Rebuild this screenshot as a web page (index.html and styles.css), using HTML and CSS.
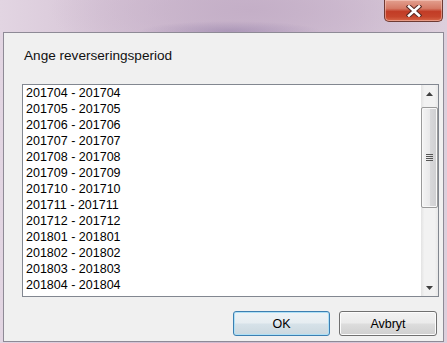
FILE: index.html
```html
<!DOCTYPE html>
<html>
<head>
<meta charset="utf-8">
<link rel="stylesheet" href="styles.css">
</head>
<body>
<div class="window">
  <div class="titlebar">
    <div class="close">
      <svg width="16" height="12" viewBox="0 0 16 12">
        <path d="M3 1.5 L13 10.5 M13 1.5 L3 10.5" stroke="#5a2a24" stroke-width="4.6" stroke-linecap="square" fill="none"/>
        <path d="M3 1.5 L13 10.5 M13 1.5 L3 10.5" stroke="#ffffff" stroke-width="2.6" stroke-linecap="square" fill="none"/>
      </svg>
    </div>
  </div>
  <div class="client">
    <div class="label">Ange reverseringsperiod</div>
    <div class="listbox">
      <div class="items">
        <div class="item">201704 - 201704</div>
        <div class="item">201705 - 201705</div>
        <div class="item">201706 - 201706</div>
        <div class="item">201707 - 201707</div>
        <div class="item">201708 - 201708</div>
        <div class="item">201709 - 201709</div>
        <div class="item">201710 - 201710</div>
        <div class="item">201711 - 201711</div>
        <div class="item">201712 - 201712</div>
        <div class="item">201801 - 201801</div>
        <div class="item">201802 - 201802</div>
        <div class="item">201803 - 201803</div>
        <div class="item">201804 - 201804</div>
        <div class="item">201805 - 201805</div>
      </div>
      <div class="scrollbar">
        <div class="arrow">
          <svg width="7" height="4" viewBox="0 0 7 4"><path d="M0 4 L3.5 0 L7 4 Z" fill="#404040"/></svg>
        </div>
        <div class="thumb">
          <div class="grip"><span></span><span></span><span></span><span></span></div>
        </div>
        <div class="track"></div>
        <div class="arrow">
          <svg width="7" height="4" viewBox="0 0 7 4"><path d="M0 0 L7 0 L3.5 4 Z" fill="#404040"/></svg>
        </div>
      </div>
    </div>
    <div class="buttons">
      <div class="btn ok">OK</div>
      <div class="btn cancel">Avbryt</div>
    </div>
  </div>
</div>
</body>
</html>
```

FILE: styles.css
```css
html, body {
  margin: 0;
  padding: 0;
}
body {
  width: 447px;
  height: 343px;
  overflow: hidden;
  font-family: "Liberation Sans", Arial, sans-serif;
}
.window {
  width: 447px;
  height: 343px;
  background:
    radial-gradient(ellipse 90px 10px at 230px 31px, rgba(150,130,170,0.55), rgba(150,130,170,0) 100%),
    radial-gradient(ellipse 200px 60px at 250px 10px, #c4afc7 0%, rgba(196,175,199,0) 100%),
    linear-gradient(90deg, #e2d5e2 0%, #d6c4d6 25%, #cdb9cf 50%, #d3c2d5 75%, #ddcfdc 100%);
  display: flex;
  flex-direction: column;
}
.titlebar {
  height: 32px;
  display: flex;
  justify-content: flex-end;
  align-items: flex-start;
  padding-right: 4px;
}
.close {
  width: 57px;
  height: 21px;
  border: 1px solid #6e3a33;
  border-top: none;
  border-radius: 0 0 5px 5px;
  background: linear-gradient(180deg, #e3a08f 0%, #d57a66 40%, #c23c26 55%, #c6452c 80%, #d9684a 100%);
  box-shadow: inset 0 0 0 1px rgba(255,220,210,0.45);
  display: flex;
  align-items: center;
  justify-content: center;
}
.close svg {
  margin-top: 1px;
}
.client {
  width: 441px;
  height: 310px;
  margin-left: 3px;
  box-sizing: border-box;
  border: 1px solid #8e8a96;
  background: #f0f0f0;
  display: flex;
  flex-direction: column;
}
.label {
  margin: 15px 0 0 20px;
  font-size: 13.6px;
  line-height: 16px;
  height: 16px;
  color: #111;
}
.listbox {
  margin: 20px 0 0 18px;
  width: 417px;
  height: 213px;
  box-sizing: border-box;
  border: 1px solid #828790;
  background: #fff;
  display: flex;
}
.items {
  flex: 1;
  overflow: hidden;
  padding-left: 3px;
}
.item {
  font-size: 12.5px;
  line-height: 16px;
  height: 16px;
  color: #000;
  white-space: nowrap;
}
.scrollbar {
  width: 17px;
  background: linear-gradient(90deg, #e3e3e3 0%, #f2f2f2 20%, #f2f2f2 80%, #e8e8e8 100%);
  display: flex;
  flex-direction: column;
}
.arrow {
  height: 17px;
  display: flex;
  align-items: center;
  justify-content: center;
}
.thumb {
  margin: 5px 0 0 0;
  height: 101px;
  box-sizing: border-box;
  border: 1px solid #9a9a9a;
  border-radius: 2px;
  background: linear-gradient(90deg, #f4f4f4 0%, #e9e9ea 50%, #d8d8da 55%, #cfcfd1 100%);
  box-shadow: inset 0 0 0 1px #f8f8f8;
  display: flex;
  align-items: center;
  justify-content: center;
}
.grip {
  display: flex;
  flex-direction: column;
  gap: 1px;
}
.grip span {
  display: block;
  width: 7px;
  height: 1px;
  background: #555;
}
.track {
  flex: 1;
}
.buttons {
  margin: 14px 0 0 229px;
  display: flex;
  gap: 9px;
}
.btn {
  height: 25px;
  box-sizing: border-box;
  border-radius: 3px;
  font-size: 12.5px;
  display: flex;
  align-items: center;
  justify-content: center;
  color: #000;
}
.ok {
  width: 97px;
  border: 1px solid #3c7fb1;
  background: linear-gradient(180deg, #eef3f6 0%, #e6edf1 48%, #d6e2e9 52%, #cbd8df 100%);
  box-shadow: inset 0 0 0 1px #aee0f6;
}
.cancel {
  width: 98px;
  border: 1px solid #707070;
  background: linear-gradient(180deg, #f2f2f2 0%, #ebebeb 48%, #dddddd 52%, #cfcfcf 100%);
  box-shadow: inset 0 0 0 1px #fcfcfc;
}
```
